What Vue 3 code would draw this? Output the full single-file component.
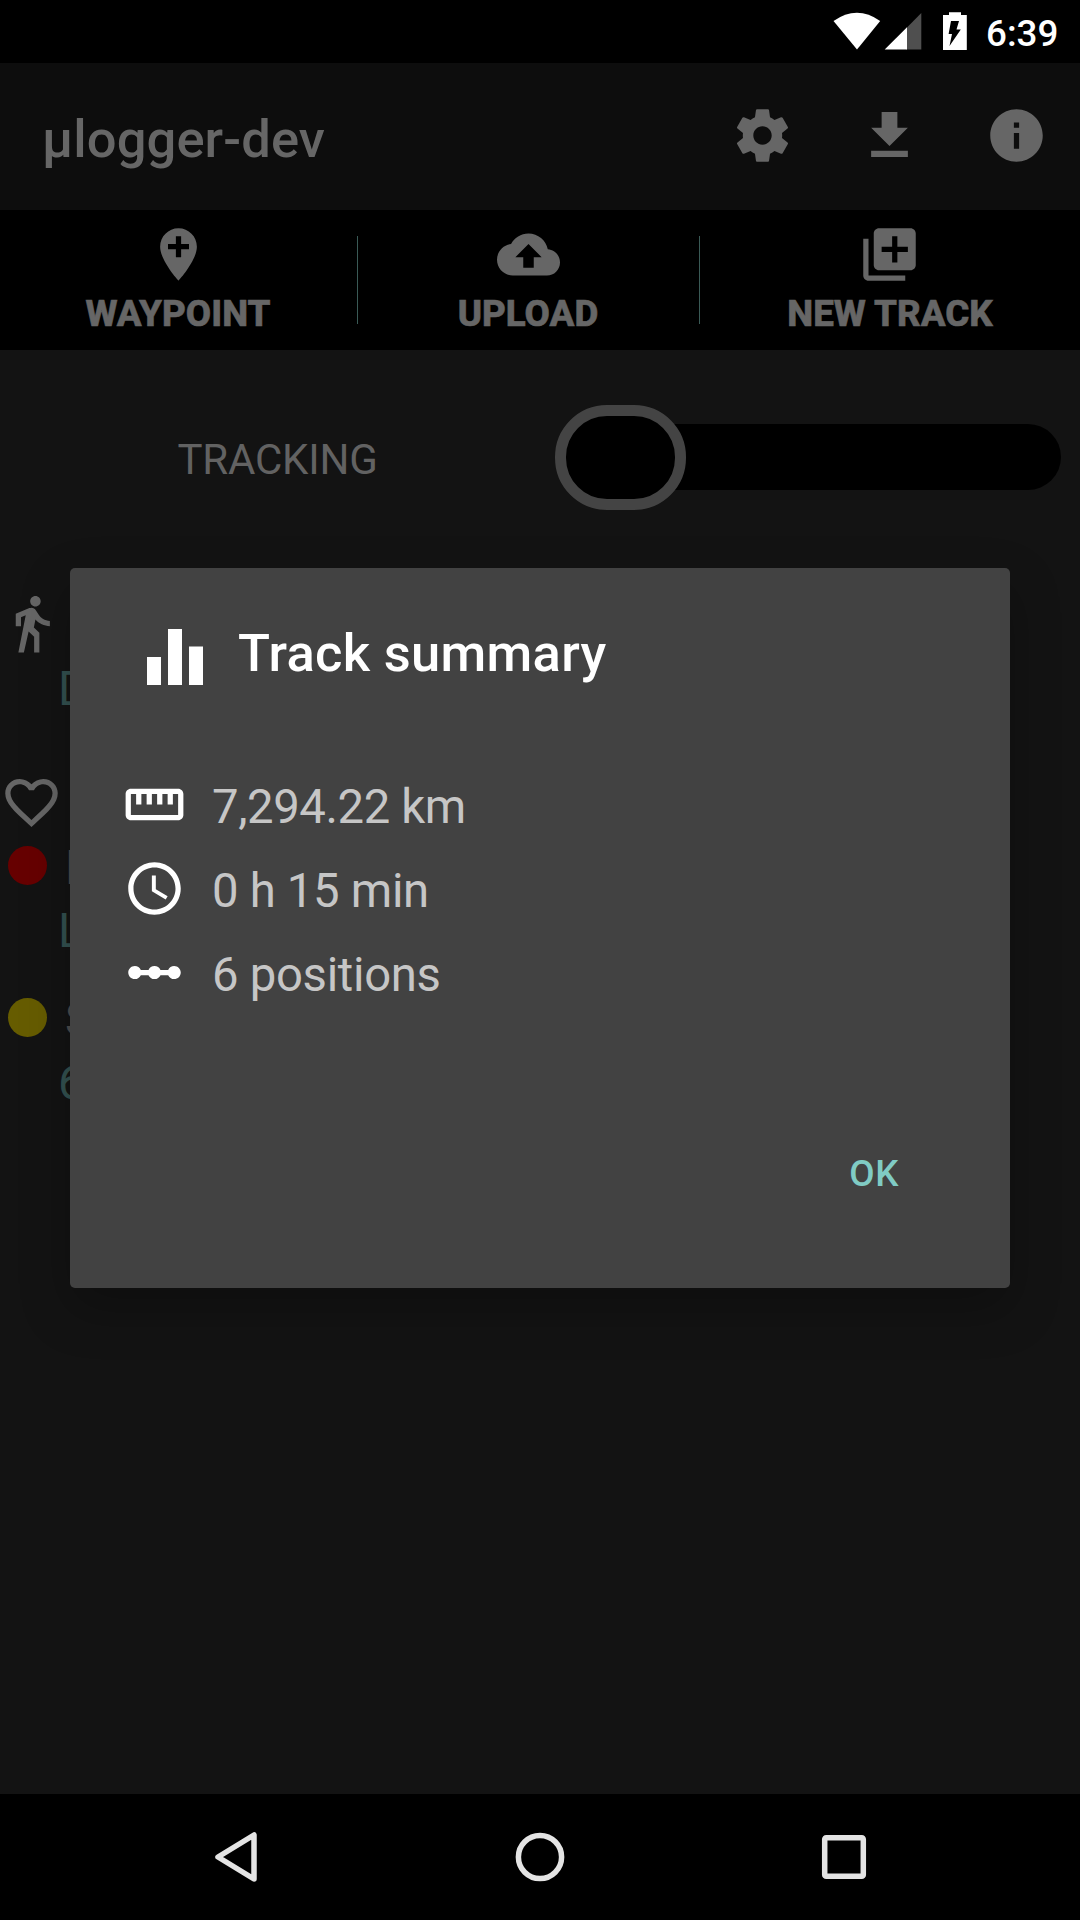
<script setup>
const barIcons = [
  'M19.43 12.98c.04-.32.07-.64.07-.98s-.03-.66-.07-.98l2.11-1.65c.19-.15.24-.42.12-.64l-2-3.46c-.12-.22-.39-.3-.61-.22l-2.49 1c-.52-.4-1.08-.73-1.69-.98l-.38-2.65C14.46 2.18 14.25 2 14 2h-4c-.25 0-.46.18-.49.42l-.38 2.65c-.61.25-1.17.59-1.69.98l-2.49-1c-.23-.09-.49 0-.61.22l-2 3.46c-.13.22-.07.49.12.64l2.11 1.65c-.04.32-.07.65-.07.98s.03.66.07.98l-2.11 1.65c-.19.15-.24.42-.12.64l2 3.46c.12.22.39.3.61.22l2.49-1c.52.4 1.08.73 1.69.98l.38 2.65c.03.24.24.42.49.42h4c.25 0 .46-.18.49-.42l.38-2.65c.61-.25 1.17-.59 1.69-.98l2.49 1c.23.09.49 0 .61-.22l2-3.46c.12-.22.07-.49-.12-.64l-2.11-1.65zM12 15.5c-1.93 0-3.5-1.57-3.5-3.5s1.57-3.5 3.5-3.5 3.5 1.57 3.5 3.5-1.57 3.5-3.5 3.5z',
  'M19 9h-4V3H9v6H5l7 7 7-7zM5 17.8v2.4h14v-2.4H5z',
  'M12 2C6.48 2 2 6.48 2 12s4.48 10 10 10 10-4.48 10-10S17.52 2 12 2zm1 15h-2v-6h2v6zm0-8h-2V7h2v2z',
]
const actions = [
  { label: 'WAYPOINT', icon: 'M12 2C8.14 2 5 5.14 5 9c0 5.25 7 13 7 13s7-7.75 7-13c0-3.86-3.14-7-7-7zm4 8h-3v3h-2v-3H8V8h3V5h2v3h3v2z' },
  { label: 'UPLOAD', icon: 'M19.35 10.04C18.67 6.59 15.64 4 12 4 9.11 4 6.6 5.64 5.35 8.04 2.34 8.36 0 10.91 0 14c0 3.31 2.69 6 6 6h13c2.76 0 5-2.24 5-5 0-2.64-2.05-4.78-4.65-4.96zM14 13v4h-4v-4H7l5-5 5 5h-3z' },
  { label: 'NEW TRACK', icon: 'M4 6H2v14c0 1.1.9 2 2 2h14v-2H4V6zm16-4H8c-1.1 0-2 .9-2 2v12c0 1.1.9 2 2 2h12c1.1 0 2-.9 2-2V4c0-1.1-.9-2-2-2zm-1 9h-4v4h-2v-4H9V9h4V5h2v4h4v2z' },
]
const summary = [
  { text: '7,294.22 km', icon: 'M21 6H3c-1.1 0-2 .9-2 2v8c0 1.1.9 2 2 2h18c1.1 0 2-.9 2-2V8c0-1.1-.9-2-2-2zm0 10H3V8h2v4h2V8h2v4h2V8h2v4h2V8h2v4h2V8h2v8z' },
  { text: '0 h 15 min', icon: 'M11.99 2C6.47 2 2 6.48 2 12s4.47 10 9.99 10C17.52 22 22 17.52 22 12S17.52 2 11.99 2zM12 20c-4.42 0-8-3.58-8-8s3.58-8 8-8 8 3.58 8 8-3.58 8-8 8zM12.5 7H11v6l5.25 3.15.75-1.23-4.5-2.67z' },
  { text: '6 positions', icon: 'M19.5 9.5c-1.03 0-1.9.62-2.29 1.5h-2.92C13.9 10.12 13.03 9.5 12 9.5s-1.9.62-2.29 1.5H6.79C6.4 10.12 5.53 9.5 4.5 9.5 3.12 9.5 2 10.62 2 12s1.12 2.5 2.5 2.5c1.03 0 1.9-.62 2.29-1.5h2.92c.39.88 1.26 1.5 2.29 1.5s1.9-.62 2.29-1.5h2.92c.39.88 1.26 1.5 2.29 1.5 1.38 0 2.5-1.12 2.5-2.5s-1.12-2.5-2.5-2.5z' },
]
</script>

<template>
  <div class="screen">
    <header class="status">
      <svg class="status-icons" width="136" height="40" viewBox="832 11 136 40">
        <path fill="#fff" d="M833.5 21Q857 4.500 880.200 21L857 49.500Z" />
        <path fill="#4f4f4f" d="M921.300 13V49.500H906V28.400Z" />
        <path fill="#fff" d="M884.700 49.500H907V27.300Z" />
        <path fill="#fff" d="M949 12.300h12V15h5.800V50H943V15h6z" />
        <path fill="#000" d="M951 21h8l-2.500 8.500h4.300L949.500 46l2.500-12h-3.400z" />
      </svg>
      <span class="clock">6:39</span>
    </header>

    <div class="appbar">
      <h1>µlogger-dev</h1>
      <svg v-for="(d, i) in barIcons" :key="i" class="icon" viewBox="0 0 24 24"><path :d="d" /></svg>
    </div>

    <nav class="toolbar">
      <div v-for="a in actions" :key="a.label" class="action">
        <svg class="icon" viewBox="0 0 24 24"><path :d="a.icon" /></svg>
        <span>{{ a.label }}</span>
      </div>
    </nav>

    <main class="content">
      <div class="tracking">
        <span>TRACKING</span>
        <div class="switch"><div class="thumb"></div></div>
      </div>
      <div class="list">
        <svg class="icon" viewBox="0 0 24 24"><path d="M13.5 5.500c1.100 0 2-.9 2-2s-.9-2-2-2-2 .9-2 2 .9 2 2 2zM9.800 8.900L7 23h2.100l1.800-8 2.100 2v6h2v-7.500l-2.100-2 .6-3C14.800 12 16.800 13 19 13v-2c-1.900 0-3.500-1-4.300-2.400l-1-1.600c-.4-.6-1-1-1.700-1-.3 0-.5.1-.8.1L6 8.300V13h2V9.600l1.800-.7" /></svg>
        <div class="value first">D</div>
        <svg class="icon" viewBox="0 0 24 24"><path d="M16.500 3c-1.740 0-3.410.81-4.500 2.090C10.910 3.810 9.240 3 7.500 3 4.420 3 2 5.420 2 8.500c0 3.780 3.400 6.860 8.550 11.540L12 21.350l1.450-1.320C18.600 15.360 22 12.280 22 8.500 22 5.420 19.580 3 16.500 3zm-4.400 15.550l-.1.100-.1-.1C7.140 14.240 4 11.390 4 8.500 4 6.500 5.500 5 7.500 5c1.540 0 3.040.99 3.570 2.360h1.870C13.460 5.990 14.960 5 16.500 5c2 0 3.500 1.500 3.500 3.500 0 2.890-3.140 5.740-7.900 10.050z" /></svg>
        <div class="state"><i class="dot red"></i><span>L</span></div>
        <div class="value">L</div>
        <div class="state second"><i class="dot yellow"></i><span>S</span></div>
        <div class="value">6</div>
      </div>
    </main>

    <footer class="navbar">
      <svg width="46" height="52" viewBox="0 0 46 52"><path d="M41 4V48L5 26Z" /></svg>
      <svg width="50" height="50" viewBox="0 0 50 50"><circle cx="25" cy="25" r="21.600" /></svg>
      <svg width="46" height="46" viewBox="0 0 46 46"><rect x="3.700" y="3.700" width="38.600" height="38.600" rx="1.500" /></svg>
    </footer>

    <section class="dialog">
      <div class="heading">
        <svg width="56" height="56" viewBox="0 0 56 56"><path d="M0 28h14v28H0zM21 0h14v56H21zM42 17.500h14V56H42z" /></svg>
        <h2>Track summary</h2>
      </div>
      <div v-for="s in summary" :key="s.text" class="row">
        <svg class="icon" viewBox="0 0 24 24"><path :d="s.icon" /></svg>
        <span>{{ s.text }}</span>
      </div>
      <button class="ok">OK</button>
    </section>
  </div>
</template>

<style>
body { background: #131313; }
</style>

<style scoped>
.screen {
  position: relative;
  display: flex;
  flex-direction: column;
  width: 1080px;
  height: 1920px;
  overflow: hidden;
  background: #131313;
  color: #666;
  font-family: Roboto, sans-serif;
  white-space: nowrap;
}
.icon { flex: none; display: block; width: 63px; height: 63px; fill: currentColor; }
h1, h2 { margin: 0; font-size: 52.5px; font-weight: 500; }

.status { display: flex; flex: none; height: 63px; background: #000; padding-left: 832px; }
.status-icons { flex: none; margin-top: 11px; }
.clock { margin: 10px 0 0 18px; font-size: 36.75px; line-height: 48px; font-weight: 500; color: #fff; }

.appbar { display: flex; flex: none; box-sizing: border-box; height: 147px; padding: 41px 32px 0 42px; gap: 64px; background: #0d0d0d; }
.appbar h1 { flex: 1; line-height: 63px; padding-top: 4px; letter-spacing: 0.1px; }

.toolbar { display: flex; flex: none; height: 140px; background: #000; }
.action { position: relative; display: flex; flex-direction: column; align-items: center; box-sizing: border-box; width: 358px; padding: 13px 2px 0 0; }
.action:nth-child(2) { width: 342px; }
.action:nth-child(3) { width: 380px; }
.action:nth-child(3) span { padding-left: 2px; }
.action:not(:last-child)::after { content: ""; position: absolute; right: 0; top: 26px; width: 1px; height: 88px; background: #3a5a56; }
.action span { margin-top: 8px; font-size: 36.75px; line-height: 40px; font-weight: 800; -webkit-text-stroke: 0.6px #666; }

.content { flex: 1; }
.tracking { display: flex; align-items: center; height: 214px; }
.tracking > span { width: 555px; padding-top: 5px; text-align: center; font-size: 42px; line-height: 50px; letter-spacing: -0.2px; color: #626262; }
.switch { display: flex; align-items: center; width: 506px; height: 66px; border-radius: 33px; background: #000; }
.thumb { box-sizing: border-box; width: 131px; height: 105px; flex: none; border: 11px solid #444; border-radius: 52px; background: #000; }

.list { padding-top: 28px; font-size: 47.25px; }
.value { padding-left: 58px; line-height: 56px; margin-top: 18px; color: #335150; }
.value.first { margin: 6px 0 54px; }
.state { display: flex; height: 39px; margin-top: 12px; line-height: 44px; color: #4d4d4d; }
.state.second { margin-top: 39px; }
.dot { width: 39px; height: 39px; margin: 0 18px 0 8px; border-radius: 50%; }
.red { background: #600; }
.yellow { background: #665c00; }

.navbar { display: flex; align-items: center; flex: none; height: 126px; background: #000; }
.navbar svg { flex: none; fill: none; stroke: #e4e4e4; stroke-width: 5.5; stroke-linejoin: round; }
.navbar svg:nth-child(1) { margin-left: 213px; }
.navbar svg:nth-child(2) { margin-left: 256px; }
.navbar svg:nth-child(3) { margin-left: 256px; }

.dialog {
  position: absolute;
  left: 70px;
  top: 568px;
  display: flex;
  flex-direction: column;
  box-sizing: border-box;
  width: 940px;
  height: 720px;
  padding: 61px 53px 0;
  border-radius: 5px;
  background: #424242;
  color: #fff;
  box-shadow: 0 20px 50px rgba(0, 0, 0, 0.25);
}
.heading { display: flex; height: 56px; margin: 0 0 88px 24px; gap: 35px; }
.heading svg { fill: #fff; }
.heading h2 { line-height: 48px; letter-spacing: 0.3px; }
.row { display: flex; height: 63px; margin-bottom: 21px; gap: 26px; }
.row span { font-size: 47.25px; line-height: 63px; padding-top: 3px; letter-spacing: -0.3px; color: #c6c6c6; }
.row:nth-child(2) span { letter-spacing: -0.4px; }
.ok { align-self: flex-end; margin: 127px 58px 0 0; padding: 0; border: 0; background: none; color: #80cbc4; font: 500 36.75px/44px Roboto, sans-serif; letter-spacing: 0.6px; }
</style>
